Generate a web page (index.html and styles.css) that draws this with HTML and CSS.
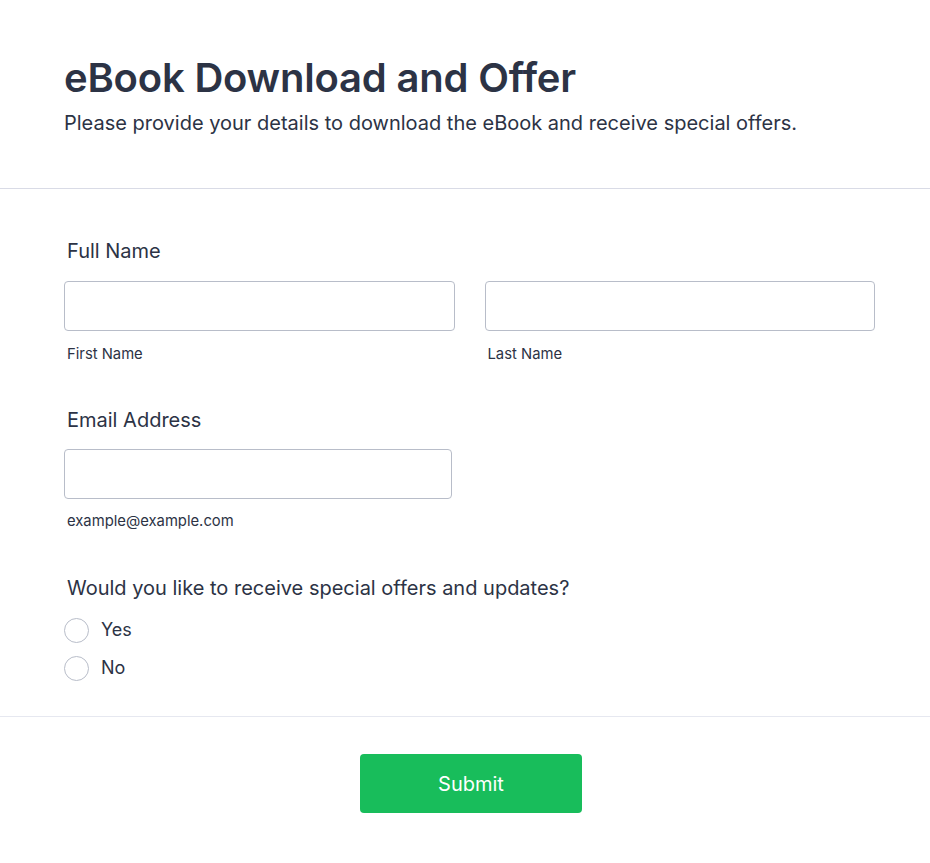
FILE: index.html
```html
<!DOCTYPE html>
<html lang="en">
<head>
<meta charset="utf-8">
<title>eBook Download and Offer</title>
<link rel="stylesheet" href="styles.css">
</head>
<body>
<div class="page">
  <header class="header">
    <h1 class="title">eBook Download and Offer</h1>
    <p class="subtitle">Please provide your details to download the eBook and receive special offers.</p>
  </header>
  <form class="body">
    <div class="field">
      <div class="label">Full Name</div>
      <div class="name-row">
        <div class="sub-field">
          <input class="input" type="text">
          <div class="sublabel">First Name</div>
        </div>
        <div class="sub-field">
          <input class="input" type="text">
          <div class="sublabel">Last Name</div>
        </div>
      </div>
    </div>
    <div class="field field-email">
      <div class="label">Email Address</div>
      <div class="email-wrap">
        <input class="input" type="email">
        <div class="sublabel">example@example.com</div>
      </div>
    </div>
    <div class="field field-radio">
      <div class="label">Would you like to receive special offers and updates?</div>
      <div class="options">
        <label class="option"><span class="radio"></span><span class="option-text">Yes</span></label>
        <label class="option"><span class="radio"></span><span class="option-text">No</span></label>
      </div>
    </div>
  </form>
  <footer class="footer">
    <button class="submit" type="button">Submit</button>
  </footer>
</div>
</body>
</html>
```
FILE: styles.css
```css
* { box-sizing: border-box; }
html, body { margin: 0; padding: 0; background: #ffffff; }
body {
  font-family: Inter, "Noto Sans", "Liberation Sans", sans-serif;
  color: #2c3345;
}
.page { width: 930px; }
.header {
  padding: 54px 64px 52px 64px;
  border-bottom: 1px solid #d9dbe6;
}
.title {
  margin: 0;
  font-size: 40px;
  line-height: 48px;
  font-weight: 600;
  letter-spacing: -0.2px;
}
.subtitle {
  margin: 8px 0 0;
  font-size: 20px;
  line-height: 26px;
  font-weight: 400;
}
.body {
  padding: 50px 55px 33px 64px;
  border-bottom: 1px solid #e6e8f0;
}
.field { display: flex; flex-direction: column; }
.label {
  padding-left: 3px;
  font-size: 20px;
  line-height: 24px;
  font-weight: 400;
}
.name-row {
  margin-top: 18px;
  display: grid;
  grid-template-columns: 1fr 1fr;
  column-gap: 30px;
}
.sub-field { display: flex; flex-direction: column; }
.input {
  display: block;
  width: 100%;
  height: 50px;
  border: 1px solid #b8bdc9;
  border-radius: 4px;
  background: #fff;
  margin: 0;
}
.sublabel {
  margin-top: 13px;
  padding-left: 3px;
  font-size: 14.8px;
  line-height: 20px;
}
.field-email { margin-top: 44px; }
.email-wrap { margin-top: 17px; width: 388px; }
.email-wrap .sublabel { margin-top: 12px; }
.field-radio { margin-top: 45px; }
.options {
  margin-top: 15px;
  display: flex;
  flex-direction: column;
  gap: 8px;
}
.option {
  display: flex;
  align-items: center;
  gap: 12px;
  height: 30px;
}
.radio {
  width: 25px;
  height: 25px;
  border: 1px solid #b8bdc9;
  border-radius: 50%;
  background: #fff;
  flex: none;
}
.option-text { font-size: 18px; line-height: 24px; }
.footer {
  display: flex;
  justify-content: center;
  padding: 37px 0 40px 12px;
}
.submit {
  width: 222px;
  height: 59px;
  border: none;
  border-radius: 4px;
  background: #18bd5b;
  color: #fff;
  font-family: Inter, "Noto Sans", "Liberation Sans", sans-serif;
  font-size: 20px;
  font-weight: 400;
}
```
